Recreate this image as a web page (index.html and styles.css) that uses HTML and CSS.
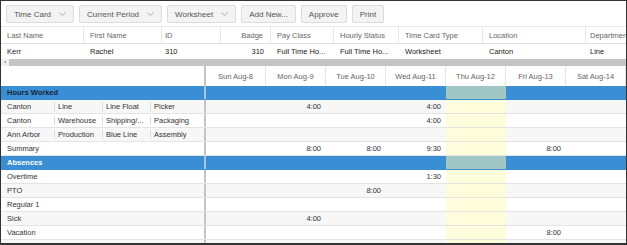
FILE: index.html
```html
<!DOCTYPE html>
<html lang="en">
<head>
    <meta charset="UTF-8">
    <title>Time Card Worksheet</title>
    <link rel="stylesheet" href="styles.css">
</head>
<body>
    <div class="frame">
        <div class="toolbar">
            <button class="tb-btn">Time Card <svg class="caret" viewBox="0 0 7 4"><polyline points="0.5,0.5 3.5,3.5 6.5,0.5"/></svg></button>
            <button class="tb-btn">Current Period <svg class="caret" viewBox="0 0 7 4"><polyline points="0.5,0.5 3.5,3.5 6.5,0.5"/></svg></button>
            <button class="tb-btn">Worksheet <svg class="caret" viewBox="0 0 7 4"><polyline points="0.5,0.5 3.5,3.5 6.5,0.5"/></svg></button>
            <button class="tb-btn">Add New...</button>
            <button class="tb-btn">Approve</button>
            <button class="tb-btn">Print</button>
        </div>

        <!-- employee summary -->
        <div class="summary">
            <div class="s-row s-head">
                <div class="s-cell w-last">Last Name</div>
                <div class="s-cell w-first">First Name</div>
                <div class="s-cell w-id">ID</div>
                <div class="s-cell w-badge num">Badge</div>
                <div class="s-cell w-pay">Pay Class</div>
                <div class="s-cell w-hourly">Hourly Status</div>
                <div class="s-cell w-type">Time Card Type</div>
                <div class="s-cell w-loc">Location</div>
                <div class="s-cell w-dept">Department</div>
            </div>
            <div class="s-row s-data">
                <div class="s-cell w-last">Kerr</div>
                <div class="s-cell w-first">Rachel</div>
                <div class="s-cell w-id">310</div>
                <div class="s-cell w-badge num">310</div>
                <div class="s-cell w-pay">Full Time Ho...</div>
                <div class="s-cell w-hourly">Full Time Ho...</div>
                <div class="s-cell w-type">Worksheet</div>
                <div class="s-cell w-loc">Canton</div>
                <div class="s-cell w-dept">Line</div>
            </div>
        </div>
        <div class="hscroll">
            <span class="hs-arrow"></span>
            <span class="hs-track"></span>
        </div>

        <!-- weekly sheet -->
        <div class="sheet">
            <div class="row head">
                <div class="lbl"></div>
                <div class="d">Sun Aug-8</div>
                <div class="d">Mon Aug-9</div>
                <div class="d">Tue Aug-10</div>
                <div class="d">Wed Aug-11</div>
                <div class="d">Thu Aug-12</div>
                <div class="d">Fri Aug-13</div>
                <div class="d">Sat Aug-14</div>
            </div>

            <div class="row band">
                <div class="lbl">Hours Worked</div>
                <div class="d"></div><div class="d"></div><div class="d"></div><div class="d"></div>
                <div class="d today"></div><div class="d"></div><div class="d"></div>
            </div>
            <div class="row alt">
                <div class="lbl split"><span class="c1">Canton</span><span class="c2">Line</span><span class="c3">Line Float</span><span class="c4">Picker</span></div>
                <div class="d"></div><div class="d">4:00</div><div class="d"></div><div class="d">4:00</div>
                <div class="d today"></div><div class="d"></div><div class="d"></div>
            </div>
            <div class="row">
                <div class="lbl split"><span class="c1">Canton</span><span class="c2">Warehouse</span><span class="c3">Shipping/...</span><span class="c4">Packaging</span></div>
                <div class="d"></div><div class="d"></div><div class="d"></div><div class="d">4:00</div>
                <div class="d today"></div><div class="d"></div><div class="d"></div>
            </div>
            <div class="row alt">
                <div class="lbl split"><span class="c1">Ann Arbor</span><span class="c2">Production</span><span class="c3">Blue Line</span><span class="c4">Assembly</span></div>
                <div class="d"></div><div class="d"></div><div class="d"></div><div class="d"></div>
                <div class="d today"></div><div class="d"></div><div class="d"></div>
            </div>
            <div class="row">
                <div class="lbl">Summary</div>
                <div class="d"></div><div class="d">8:00</div><div class="d">8:00</div><div class="d">9:30</div>
                <div class="d today"></div><div class="d">8:00</div><div class="d"></div>
            </div>

            <div class="row band light">
                <div class="lbl">Absences</div>
                <div class="d"></div><div class="d"></div><div class="d"></div><div class="d"></div>
                <div class="d today"></div><div class="d"></div><div class="d"></div>
            </div>
            <div class="row">
                <div class="lbl">Overtime</div>
                <div class="d"></div><div class="d"></div><div class="d"></div><div class="d">1:30</div>
                <div class="d today"></div><div class="d"></div><div class="d"></div>
            </div>
            <div class="row alt">
                <div class="lbl">PTO</div>
                <div class="d"></div><div class="d"></div><div class="d">8:00</div><div class="d"></div>
                <div class="d today"></div><div class="d"></div><div class="d"></div>
            </div>
            <div class="row">
                <div class="lbl">Regular 1</div>
                <div class="d"></div><div class="d"></div><div class="d"></div><div class="d"></div>
                <div class="d today"></div><div class="d"></div><div class="d"></div>
            </div>
            <div class="row alt">
                <div class="lbl">Sick</div>
                <div class="d"></div><div class="d">4:00</div><div class="d"></div><div class="d"></div>
                <div class="d today"></div><div class="d"></div><div class="d"></div>
            </div>
            <div class="row">
                <div class="lbl">Vacation</div>
                <div class="d"></div><div class="d"></div><div class="d"></div><div class="d"></div>
                <div class="d today"></div><div class="d">8:00</div><div class="d"></div>
            </div>
            <div class="row alt">
                <div class="lbl"></div>
                <div class="d"></div><div class="d"></div><div class="d"></div><div class="d"></div>
                <div class="d today"></div><div class="d"></div><div class="d"></div>
            </div>
        </div>
    </div>
</body>
</html>
```

FILE: styles.css
```css
* {
    box-sizing: border-box;
}
body {
    margin: 0;
    font-family: "Liberation Sans", Arial, sans-serif;
    background: #fff;
}
.frame {
    width: 627px;
    height: 245px;
    border: 1px solid #333;
    border-bottom-width: 2px;
    overflow: hidden;
    background: #fff;
}

/* toolbar */
.toolbar {
    display: flex;
    gap: 5px;
    height: 25px;
    padding: 4px 5px 0;
}
.tb-btn {
    height: 18px;
    padding: 0 7px;
    display: flex;
    align-items: center;
    gap: 8px;
    background: #f3f3f3;
    border: 1px solid #dcdcdc;
    border-radius: 2px;
    color: #555;
    font-family: inherit;
    font-size: 8px;
    white-space: nowrap;
}
.caret {
    width: 7px;
    height: 4px;
    fill: none;
    stroke: #999;
    stroke-width: 0.8;
}

/* summary grid */
.summary {
    font-size: 7.5px;
}
.s-row {
    display: flex;
}
.s-head {
    height: 18px;
    border-top: 1px solid #e8e8e8;
    border-bottom: 1px solid #e0e0e0;
    color: #666;
}
.s-data {
    height: 14px;
    color: #222;
}
.s-cell {
    flex: none;
    display: flex;
    align-items: center;
    padding-left: 6px;
    white-space: nowrap;
    overflow: hidden;
}
.s-head .s-cell {
    border-right: 1px solid #e6e6e6;
}
.s-cell.num {
    justify-content: flex-end;
    padding: 0 7px 0 0;
}
.w-last { width: 83px; }
.w-first { width: 78px; }
.w-id { width: 59px; padding-left: 3px; }
.w-badge { width: 50px; }
.w-pay { width: 63px; }
.w-hourly { width: 65px; }
.w-type { width: 84px; }
.w-loc { width: 103px; }
.w-dept { width: 60px; padding-left: 4px; }

.hscroll {
    display: flex;
    height: 8px;
    padding-top: 1px;
}
.hs-arrow {
    width: 8px;
    background: #f0f0f0;
    position: relative;
}
.hs-arrow::after {
    content: "";
    position: absolute;
    left: 3px;
    top: 2px;
    border-top: 1.5px solid transparent;
    border-bottom: 1.5px solid transparent;
    border-right: 2px solid #777;
}
.hs-track {
    flex: 1;
    background: #c4c4c4;
}

/* weekly sheet */
.sheet {
    font-size: 7.5px;
    color: #333;
}
.row {
    display: flex;
    height: 14px;
    border-bottom: 1px solid #e4e4e4;
}
.row.alt {
    background: #f7f7f7;
}
.row.head {
    height: 20px;
    border-bottom: none;
    background: #fff;
    color: #666;
}
.lbl {
    flex: none;
    width: 205px;
    padding-left: 6px;
    border-right: 2px solid #c4c4c4;
    display: flex;
    align-items: center;
    white-space: nowrap;
}
.d {
    flex: none;
    width: 60px;
    display: flex;
    align-items: center;
    justify-content: flex-end;
    padding-right: 5px;
}
.head .d {
    justify-content: center;
    padding-right: 0;
    border-right: 1px solid #e6e6e6;
}
.d.today {
    background: #fdfddc;
}
.row.band {
    background: #3a8fd4;
    border-bottom-color: #3a8fd4;
    font-weight: bold;
    color: #17263a;
}
.row.band.light {
    color: #fff;
}
.band .lbl {
    border-right-color: #a9c6de;
}
.band .d.today {
    background: #a0c7c3;
}
.lbl.split span {
    display: block;
    height: 9px;
    line-height: 9px;
}
.c1 { width: 47px; }
.c2, .c3 { width: 48px; border-left: 1px solid #ddd; padding-left: 3px; }
.c4 { border-left: 1px solid #ddd; padding-left: 3px; }
```
